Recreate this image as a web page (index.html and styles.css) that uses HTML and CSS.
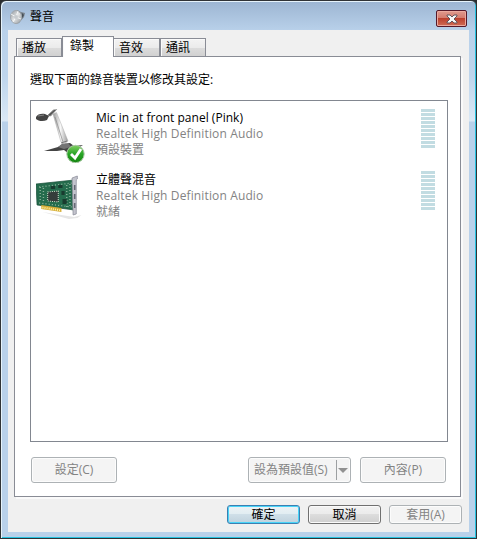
FILE: index.html
```
<!DOCTYPE html>
<html lang="zh-Hant">
<head>
<meta charset="utf-8">
<title>聲音</title>
<link rel="stylesheet" href="styles.css">
</head>
<body>
<main class="window">
  <header class="titlebar">
    <svg class="app-icon" width="16" height="16" viewBox="0 0 16 16">
      <defs><linearGradient id="cone" x2="1" y2="1"><stop stop-color="#8d9399"/><stop offset=".5" stop-color="#e3e5e6"/><stop offset="1" stop-color="#8e9499"/></linearGradient></defs>
      <path d="M7 1l4 2 4 1-1 4-5 6-4 1z" fill="#79828a"/>
      <ellipse cx="6" cy="8" rx="5.5" ry="6.5" fill="url(#cone)" stroke="#a1a8ae"/>
      <path d="M6 8L1 5M6 8l2-6M6 8l5 2M6 8l-3 5" stroke="#fff" stroke-width=".8"/>
      <circle cx="6" cy="8" r="2" fill="#c7cbcf"/><path d="M12 4l2 2-2 3z" fill="#454f58"/>
    </svg>
    <h1 class="title">聲音</h1>
    <button class="close" aria-label="關閉">
      <svg width="12" height="10" viewBox="0 0 12 10"><path d="M1 1h3l2 2 2-2h3v1L8 5l3 3v1H8L6 7 4 9H1V8l3-3-3-3z" fill="#f7f7f7" stroke="#62545d"/></svg>
    </button>
  </header>
  <section class="client">
    <nav class="tabs">
      <span class="tab">播放</span><span class="tab active">錄製</span><span class="tab">音效</span><span class="tab">通訊</span>
    </nav>
    <section class="panel">
      <p class="prompt">選取下面的錄音裝置以修改其設定:</p>
      <ul class="devices">
        <li class="device">
          <svg class="device-icon" width="50" height="54" viewBox="0 0 50 54">
            <defs>
              <linearGradient id="arm"><stop stop-color="#999"/><stop offset=".5" stop-color="#f8f8f8"/><stop offset="1" stop-color="#999"/></linearGradient>
              <linearGradient id="ok" x2="0" y2="1"><stop stop-color="#82cf62"/><stop offset=".5" stop-color="#27a425"/><stop offset="1" stop-color="#15850f"/></linearGradient>
            </defs>
            <path d="M8 42l14-4 5-3 7-1 4 3 9-1-8 5-6 4-5-4-7 1z" fill="#444"/>
            <path d="M22 38l5-4 6 1 2 3-7 2z" fill="#737373"/>
            <path d="M17 5l3.5-1.5L32 32l-4 3-3-2z" fill="url(#arm)" stroke="#aaa" stroke-width=".5"/>
            <path d="M19 8l8 25" stroke="#888" stroke-width=".7"/><path d="M25 34l6-2" stroke="#777"/>
            <path d="M11 7l6-6 4-1-6 7z" fill="#bbb" stroke="#888" stroke-width=".5"/>
            <path d="M0 8c1-3 6-4 9-3l4 2-2 4c-4 2-9 1-11-1z" fill="#444"/>
            <path d="M2 7l6-1" stroke="#858585"/><path d="M12 6l6-5 2 0-6 6z" fill="#555"/>
            <circle cx="39.5" cy="45" r="8.7" fill="url(#ok)" stroke="#adc9a9"/>
            <path d="M35 45l4 4 6-9" stroke="#fff" stroke-width="2.8" fill="none"/>
          </svg>
          <div class="info"><span class="name">Mic in at front panel (Pink)</span><span class="driver">Realtek High Definition Audio</span><span class="state">預設裝置</span></div>
          <span class="meter"></span>
        </li>
        <li class="device">
          <svg class="device-icon" width="50" height="54" viewBox="0 0 50 54">
            <g transform="matrix(1.06 0 0 1 0 4)">
            <path d="M6 37l30 5 7-2-4 3-8 1z" fill="#e6e6e6"/>
            <path d="M0 9l36-4v30L1 30z" fill="#256c4d" stroke="#174e38" stroke-width=".7"/>
            <path d="M3 12l31-4M3 28l31 4M4 12v14M7 13v15M29 10v22M32 9v23" stroke="#8db39b" stroke-width="1.3" stroke-dasharray="1 2"/>
            <path d="M11 17l10-1v11l-10-1z" fill="#353d3b" stroke="#c7d6c3" stroke-dasharray="1 1"/>
            <path d="M14 11h4v3h-4zM21 10h4v3h-4zM24 16h3v4h-3zM25 24h4v5h-4z" fill="#193b2f"/>
            <path d="M5 30l19 3v4L5 34z" fill="#d4ab35"/><path d="M6 32.5l18 3" stroke="#fff0a0" stroke-width="2" stroke-dasharray="1 1"/>
            <path d="M34 3l5-2v3l-1 1v34l-3 1z" fill="#c3c4cd" stroke="#878995" stroke-width=".7"/>
            <path d="M36.5 10v5M36.5 19v5M36.5 28v5" stroke="#656874" stroke-width="1.5"/>
            </g>
          </svg>
          <div class="info"><span class="name">立體聲混音</span><span class="driver">Realtek High Definition Audio</span><span class="state">就緒</span></div>
          <span class="meter"></span>
        </li>
      </ul>
      <div class="actions">
        <button class="btn disabled">設定(C)</button>
        <button class="btn disabled split"><span class="split-label">設為預設值(S)</span><span class="arrow"></span></button>
        <button class="btn disabled">內容(P)</button>
      </div>
    </section>
    <footer class="dialog-buttons">
      <button class="btn primary">確定</button><button class="btn">取消</button><button class="btn disabled">套用(A)</button>
    </footer>
  </section>
</main>
</body>
</html>
```
FILE: styles.css
```
* { box-sizing: border-box; }
body { margin: 0; background: #292c2e; font: 12px/16px "Open Sans", "Noto Sans CJK TC", sans-serif; color: #000; }
.window { width: 477px; height: 539px; padding: 0 7px 6px; border: 1px solid #303336; border-radius: 6px 6px 0 0; box-shadow: inset 1px 1px #e6f3fb, inset -1px -1px #26c3e1; background: linear-gradient(#9cb5d2 0, #b9d1ea 30px, #bed5ec 75px, #dae8f5 120px, #b9d1ea 121px, #b9d1ea 100%); }
.titlebar { height: 29px; display: flex; align-items: flex-start; }
.app-icon { margin: 8px 0 0 2px; }
.title { font: 12px/16px "Noto Sans CJK TC", sans-serif; margin: 7px 0 0 4px; }
.close { width: 31px; height: 17px; margin: 9px 2px 0 auto; padding: 0; display: grid; place-items: center; border: 1px solid #55192a; border-radius: 2px; box-shadow: inset 0 0 0 1px #eba99e; background: linear-gradient(#df9a8e, #d37a6d 48%, #bb402e 50%, #d06c55); }
.client { width: 461px; height: 502px; background: #f0f0f0; padding: 6px; }
.tabs { height: 20px; padding-left: 2px; display: flex; align-items: flex-end; }
.tab { width: 46px; height: 18px; padding: 0 0 0 5px; border: 1px solid #898c95; border-width: 1px 1px 0; background: linear-gradient(#f3f3f3, #ebebeb 50%, #dcdcdc 51%, #d1d1d1); box-shadow: inset 1px 1px #fafafa; line-height: 18px; }
.tab.active { width: 52px; height: 21px; margin: 0 0 -1px; padding-left: 7px; background: #fff; position: relative; }
.tab.active + .tab { border-left: 0; }
.panel { width: 447px; height: 441px; padding: 14px 14px 13px 15px; border: 1px solid #898c95; background: #fff; box-shadow: 2px 2px #fafafa; }
.prompt { height: 29px; margin: 0; line-height: 18px; }
.devices { list-style: none; width: 418px; height: 342px; margin: 0; padding: 4px 0; border: 1px solid #828790; }
.device { height: 62px; display: flex; }
.device-icon { margin: 4px 0 0 5px; flex: none; }
.info { display: flex; flex-direction: column; margin: 5px 0 0 10px; }
.name, .driver, .state { height: 16px; white-space: nowrap; }
.name { letter-spacing: .02px; }
.driver { letter-spacing: .13px; }
.driver, .state { color: #838383; }
.meter { width: 14px; height: 39px; margin: 4px 12px 0 auto; background: repeating-linear-gradient(#c2dce2 0 3px, #fff 3px 4px); }
.actions { display: flex; margin-top: 15px; padding-left: 1px; }
.btn { font: inherit; height: 26px; padding: 0; border: 1px solid #707070; border-radius: 3px; box-shadow: inset 0 0 0 1px #fafafa; background: linear-gradient(#f2f2f2, #ebebeb 48%, #ddd 50%, #cfcfcf); color: #000; }
.btn.disabled { color: #838383; border-color: #adb2b5; background: #f4f4f4; box-shadow: inset 0 0 0 1px #fcfcfc; }
.actions .btn { width: 86px; }
.actions .split { width: 103px; margin: 0 9px 0 131px; display: flex; align-items: center; }
.split-label { width: 88px; padding-left: 5px; text-align: left; height: 20px; line-height: 19px; border-right: 1px solid #9da0a2; white-space: nowrap; }
.arrow { border: 5px solid transparent; border-top-color: #919191; border-bottom: 0; margin-left: 1px; }
.dialog-buttons { display: flex; justify-content: flex-end; gap: 8px; margin-top: 8px; margin-right: 1px; }
.dialog-buttons .btn { width: 73px; height: 19px; line-height: 16px; }
.dialog-buttons .btn:not(.disabled) { padding-right: 0; }
.dialog-buttons .primary { border-color: #3c7fb1; box-shadow: inset 0 0 0 1px #48d4f8; background: linear-gradient(#edf3f6, #e1edf2 48%, #cfdfe8 50%, #bfd2dd); }
```
